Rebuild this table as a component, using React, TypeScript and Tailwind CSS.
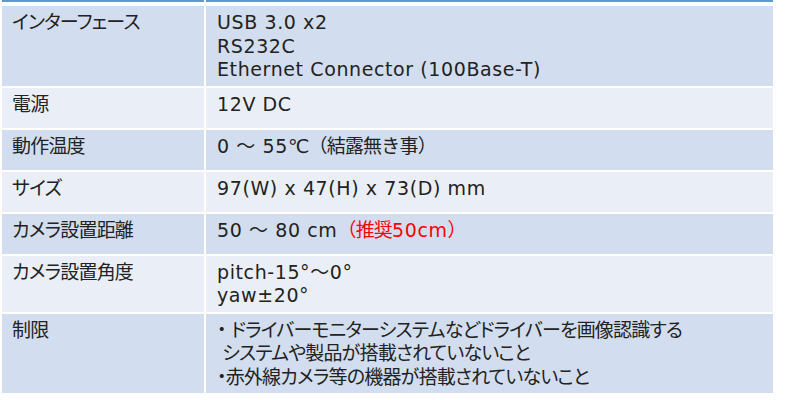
// CJK runs are set a little tighter than the Latin ones
function J({ children, red, full }: { children: React.ReactNode; red?: boolean; full?: boolean }) {
  return (
    <span
      className={`tracking-[-0.8px] ${red ? "text-[#ff0000]" : ""} ${full ? "[font-feature-settings:normal]" : ""}`}
    >
      {children}
    </span>
  );
}

const rows: { label: string; lines: React.ReactNode[] }[] = [
  {
    label: "インターフェース",
    lines: ["USB 3.0 x2", "RS232C", "Ethernet Connector (100Base-T)"],
  },
  { label: "電源", lines: ["12V DC"] },
  {
    label: "動作温度",
    lines: [
      <>
        0 ～ 55<J full>℃（結露無き事）</J>
      </>,
    ],
  },
  { label: "サイズ", lines: ["97(W) x 47(H) x 73(D) mm"] },
  {
    label: "カメラ設置距離",
    lines: [
      <>
        50 ～ 80 cm<J red full>（推奨</J>
        <span className="text-[#ff0000]">50cm</span>
        <J red full>）</J>
      </>,
    ],
  },
  { label: "カメラ設置角度", lines: ["pitch-15°～0°", "yaw±20°"] },
  {
    label: "制限",
    lines: [
      <J>・ ドライバーモニターシステムなどドライバーを画像認識する</J>,
      <J> システムや製品が搭載されていないこと</J>,
      <J>・赤外線カメラ等の機器が搭載されていないこと</J>,
    ],
  },
];

function App() {
  return (
    <div className="w-[800px] h-[400px] bg-white overflow-hidden font-['DejaVu_Sans','Noto_Sans_CJK_JP',sans-serif] text-[19px] leading-[23.5px] tracking-[0.6px] text-[#222] [font-feature-settings:'palt']">
      <div className="ml-[2px] w-[771px] grid grid-cols-[202px_567px] gap-[2px]">
        <div className="h-[2px] mb-[2px] bg-[#5b9bd5]" />
        <div className="h-[2px] mb-[2px] bg-[#5b9bd5]" />

        {rows.map((row, i) => {
          const bg = i % 2 === 0 ? "bg-[#d2deef]" : "bg-[#eaeff7]";
          return (
            <div key={row.label} className="contents">
              <div className={`${bg} min-h-[40px] pt-[5px] pb-[4px] pl-[10px] whitespace-pre`}>
                <J>{row.label}</J>
              </div>
              <div className={`${bg} min-h-[40px] pt-[5px] pb-[4px] pl-[11px] flex flex-col`}>
                {row.lines.map((line, j) => (
                  <div key={j} className="whitespace-pre">
                    {line}
                  </div>
                ))}
              </div>
            </div>
          );
        })}
      </div>
    </div>
  );
}

export default App;
